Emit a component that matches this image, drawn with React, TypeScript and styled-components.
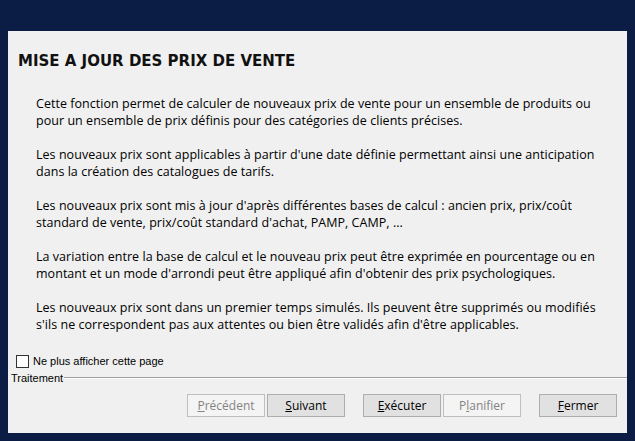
import React from "react";
import styled, { createGlobalStyle } from "styled-components";

const GlobalStyle = createGlobalStyle`
  html, body {
    margin: 0;
    padding: 0;
    background: #0b1c45;
  }
  body {
    width: 635px;
    height: 441px;
    overflow: hidden;
  }
`;

// each paragraph keeps the line breaks of the original dialog
const paragraphs = [
  [
    "Cette fonction permet de calculer de nouveaux prix de vente pour un ensemble de produits ou",
    "pour un ensemble de prix définis pour des catégories de clients précises.",
  ],
  [
    "Les nouveaux prix sont applicables à partir d'une date définie permettant ainsi une anticipation",
    "dans la création des catalogues de tarifs.",
  ],
  [
    "Les nouveaux prix sont mis à jour d'après différentes bases de calcul : ancien prix, prix/coût",
    "standard de vente, prix/coût standard d'achat, PAMP, CAMP, ...",
  ],
  [
    "La variation entre la base de calcul et le nouveau prix peut être exprimée en pourcentage ou en",
    "montant et un mode d'arrondi peut être appliqué afin d'obtenir des prix psychologiques.",
  ],
  [
    "Les nouveaux prix sont dans un premier temps simulés. Ils peuvent être supprimés ou modifiés",
    "s'ils ne correspondent pas aux attentes ou bien être validés afin d'être applicables.",
  ],
];

const Accel: React.FC<{ label: string; index?: number }> = ({ label, index = 0 }) => (
  <>
    {label.slice(0, index)}
    <u>{label[index]}</u>
    {label.slice(index + 1)}
  </>
);

const App: React.FC = () => {
  return (
    <>
      <GlobalStyle />
      <Panel>
        <Title>MISE A JOUR DES PRIX DE VENTE</Title>
        <Body>
          {paragraphs.map((lines) => (
            <Paragraph key={lines[0]}>
              {lines.map((line) => (
                <Line key={line}>{line}</Line>
              ))}
            </Paragraph>
          ))}
        </Body>
        <CheckRow>
          <CheckBox type="checkbox" />
          <CheckLabel>Ne plus afficher cette page</CheckLabel>
        </CheckRow>
        <GroupHeader>
          <GroupLabel>Traitement</GroupLabel>
          <GroupLine />
        </GroupHeader>
        <ButtonBar>
          <ButtonGroup>
            <Button disabled>
              <Accel label="Précédent" />
            </Button>
            <Button>
              <Accel label="Suivant" />
            </Button>
          </ButtonGroup>
          <ButtonGroup>
            <Button>
              <Accel label="Exécuter" />
            </Button>
            <Button disabled>
              <Accel label="Planifier" index={1} />
            </Button>
          </ButtonGroup>
          <ButtonGroup>
            <Button>
              <Accel label="Fermer" />
            </Button>
          </ButtonGroup>
        </ButtonBar>
      </Panel>
    </>
  );
};

const Panel = styled.div`
  box-sizing: border-box;
  margin: 31px 8px 0 8px;
  width: 619px;
  height: 402px;
  background: #f0f0f0;
  display: flex;
  flex-direction: column;
  font-family: "Open Sans", "Noto Sans", sans-serif;
  color: #000;
`;

const Title = styled.h1`
  margin: 21px 0 0 10px;
  font-family: "DejaVu Sans", Verdana, sans-serif;
  font-weight: bold;
  font-size: 15px;
  line-height: 19px;
  color: #111;
`;

const Body = styled.div`
  margin: 24px 0 0 28px;
  display: flex;
  flex-direction: column;
  gap: 17px;
`;

const Paragraph = styled.p`
  margin: 0;
  font-size: 12.5px;
  letter-spacing: 0.04px;
  line-height: 17px;
  white-space: nowrap;
`;

const Line = styled.span`
  display: block;
`;

const CheckRow = styled.div`
  display: flex;
  align-items: center;
  margin: 21px 0 0 8px;
  height: 14px;
`;

const CheckBox = styled.input`
  appearance: none;
  box-sizing: border-box;
  width: 13px;
  height: 13px;
  margin: 0;
  border: 1px solid #333;
  background: #fff;
`;

const CheckLabel = styled.span`
  margin-left: 4px;
  font-family: "Liberation Sans", Arial, sans-serif;
  font-size: 11px;
`;

const GroupHeader = styled.div`
  display: flex;
  align-items: center;
  margin: 3px 0 0 3px;
  height: 14px;
`;

const GroupLabel = styled.span`
  font-family: "Liberation Sans", Arial, sans-serif;
  font-size: 11px;
`;

const GroupLine = styled.div`
  flex: 1;
  height: 1px;
  margin-left: 1px;
  background: #a0a0a0;
  border-bottom: 1px solid #fff;
`;

const ButtonBar = styled.div`
  display: flex;
  justify-content: flex-end;
  gap: 18px;
  margin-top: 9px;
  padding-right: 10px;
`;

const ButtonGroup = styled.div`
  display: flex;
  gap: 2px;
`;

const Button = styled.button`
  box-sizing: border-box;
  width: 78px;
  height: 23px;
  padding: 0;
  font-family: "Open Sans", "Noto Sans", sans-serif;
  font-size: 12px;
  color: #000;
  background: #e1e1e1;
  border: 1px solid #adadad;
  border-radius: 0;

  &:disabled {
    color: #838383;
    background: #f4f4f4;
    border-color: #bfbfbf;
  }
`;

export default App;
